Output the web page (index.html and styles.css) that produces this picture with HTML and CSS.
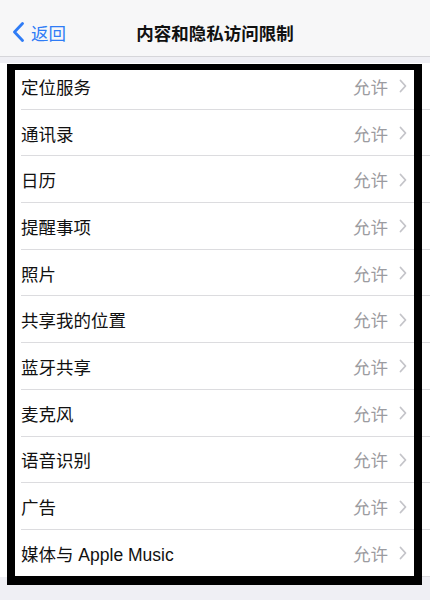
FILE: index.html
```html
<!DOCTYPE html>
<html lang="zh-CN">
<head>
<meta charset="utf-8">
<title>内容和隐私访问限制</title>
<link rel="stylesheet" href="styles.css">
</head>
<body>
<div class="page">
  <header class="nav">
    <div class="back">
      <svg class="back-icon" width="13" height="20" viewBox="0 0 13 20"><path d="M10.5 1.5 L2.5 10 L10.5 18.5" fill="none" stroke="#2f7cf6" stroke-width="2.8" stroke-linecap="round" stroke-linejoin="round"/></svg>
      <span class="back-text">返回</span>
    </div>
    <div class="title">内容和隐私访问限制</div>
    <div class="spacer"></div>
  </header>
  <main class="list">
    <div class="row"><div class="row-inner"><span class="label">定位服务</span><span class="value">允许</span><svg class="chev" width="8" height="14" viewBox="0 0 8 14"><path d="M1.5 1.5 L6.5 7 L1.5 12.5" fill="none" stroke="#c4c4c9" stroke-width="1.8" stroke-linecap="round" stroke-linejoin="round"/></svg></div></div>
    <div class="row"><div class="row-inner"><span class="label">通讯录</span><span class="value">允许</span><svg class="chev" width="8" height="14" viewBox="0 0 8 14"><path d="M1.5 1.5 L6.5 7 L1.5 12.5" fill="none" stroke="#c4c4c9" stroke-width="1.8" stroke-linecap="round" stroke-linejoin="round"/></svg></div></div>
    <div class="row"><div class="row-inner"><span class="label">日历</span><span class="value">允许</span><svg class="chev" width="8" height="14" viewBox="0 0 8 14"><path d="M1.5 1.5 L6.5 7 L1.5 12.5" fill="none" stroke="#c4c4c9" stroke-width="1.8" stroke-linecap="round" stroke-linejoin="round"/></svg></div></div>
    <div class="row"><div class="row-inner"><span class="label">提醒事项</span><span class="value">允许</span><svg class="chev" width="8" height="14" viewBox="0 0 8 14"><path d="M1.5 1.5 L6.5 7 L1.5 12.5" fill="none" stroke="#c4c4c9" stroke-width="1.8" stroke-linecap="round" stroke-linejoin="round"/></svg></div></div>
    <div class="row"><div class="row-inner"><span class="label">照片</span><span class="value">允许</span><svg class="chev" width="8" height="14" viewBox="0 0 8 14"><path d="M1.5 1.5 L6.5 7 L1.5 12.5" fill="none" stroke="#c4c4c9" stroke-width="1.8" stroke-linecap="round" stroke-linejoin="round"/></svg></div></div>
    <div class="row"><div class="row-inner"><span class="label">共享我的位置</span><span class="value">允许</span><svg class="chev" width="8" height="14" viewBox="0 0 8 14"><path d="M1.5 1.5 L6.5 7 L1.5 12.5" fill="none" stroke="#c4c4c9" stroke-width="1.8" stroke-linecap="round" stroke-linejoin="round"/></svg></div></div>
    <div class="row"><div class="row-inner"><span class="label">蓝牙共享</span><span class="value">允许</span><svg class="chev" width="8" height="14" viewBox="0 0 8 14"><path d="M1.5 1.5 L6.5 7 L1.5 12.5" fill="none" stroke="#c4c4c9" stroke-width="1.8" stroke-linecap="round" stroke-linejoin="round"/></svg></div></div>
    <div class="row"><div class="row-inner"><span class="label">麦克风</span><span class="value">允许</span><svg class="chev" width="8" height="14" viewBox="0 0 8 14"><path d="M1.5 1.5 L6.5 7 L1.5 12.5" fill="none" stroke="#c4c4c9" stroke-width="1.8" stroke-linecap="round" stroke-linejoin="round"/></svg></div></div>
    <div class="row"><div class="row-inner"><span class="label">语音识别</span><span class="value">允许</span><svg class="chev" width="8" height="14" viewBox="0 0 8 14"><path d="M1.5 1.5 L6.5 7 L1.5 12.5" fill="none" stroke="#c4c4c9" stroke-width="1.8" stroke-linecap="round" stroke-linejoin="round"/></svg></div></div>
    <div class="row"><div class="row-inner"><span class="label">广告</span><span class="value">允许</span><svg class="chev" width="8" height="14" viewBox="0 0 8 14"><path d="M1.5 1.5 L6.5 7 L1.5 12.5" fill="none" stroke="#c4c4c9" stroke-width="1.8" stroke-linecap="round" stroke-linejoin="round"/></svg></div></div>
    <div class="row"><div class="row-inner"><span class="label">媒体与 Apple Music</span><span class="value">允许</span><svg class="chev" width="8" height="14" viewBox="0 0 8 14"><path d="M1.5 1.5 L6.5 7 L1.5 12.5" fill="none" stroke="#c4c4c9" stroke-width="1.8" stroke-linecap="round" stroke-linejoin="round"/></svg></div></div>
  </main>
  <div class="frame"></div>
</div>
</body>
</html>
```

FILE: styles.css
```css
* { box-sizing: border-box; }
html, body {
  margin: 0;
  padding: 0;
  background: #efeff4;
  font-family: "Liberation Sans", "Noto Sans CJK SC", sans-serif;
}
.page {
  position: relative;
  width: 430px;
  height: 600px;
  overflow: hidden;
  background: #efeff4;
}
.nav {
  height: 57px;
  background: #f7f7f8;
  border-bottom: 1px solid #d6d6da;
  display: grid;
  grid-template-columns: 1fr auto 1fr;
  align-items: center;
  padding-top: 8px;
}
.back {
  display: flex;
  align-items: center;
  gap: 6px;
  padding-left: 12px;
}
.back-icon { display: block; }
.back-text {
  color: #2f7cf6;
  font-size: 17.5px;
}
.title {
  font-size: 17.5px;
  font-weight: 600;
  color: #111;
  font-family: "Noto Sans CJK SC", sans-serif;
}
.list {
  margin-top: 6px;
  background: #fff;
}
.row {
  height: 46.7px;
  padding-left: 21px;
  background: #fff;
}
.row-inner {
  height: 100%;
  display: flex;
  align-items: center;
  border-bottom: 1px solid #dcdcdf;
  padding-right: 23px;
  padding-top: 1px;
}
.label {
  flex: 1;
  font-size: 17.5px;
  color: #111;
}
.value {
  font-size: 17.5px;
  color: #9b9ba0;
  margin-right: 11px;
}
.chev { display: block; }
.frame {
  position: absolute;
  top: 64px;
  left: 7px;
  width: 415px;
  height: 521px;
  border-style: solid;
  border-color: #000;
  border-width: 6px 8px 9px 8px;
  pointer-events: none;
}
```
